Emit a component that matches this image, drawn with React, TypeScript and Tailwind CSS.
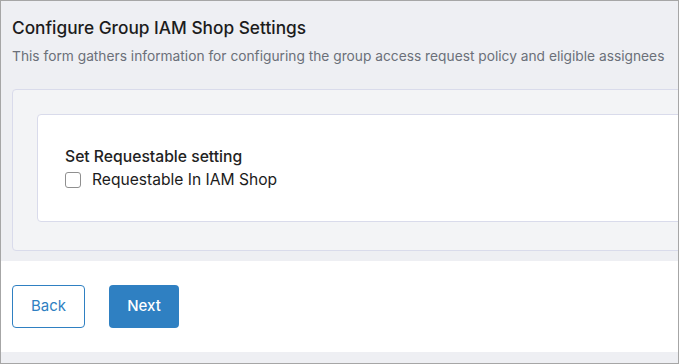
export default function App() {
  const font = { fontFamily: "Inter, 'Noto Sans', sans-serif" };
  return (
    <div
      className="w-[679px] h-[364px] border border-[#a6a6a6] bg-[#eeeff3] overflow-hidden flex flex-col"
      style={font}
    >
      <div className="pl-[11px] pt-[15px]">
        <h1 className="text-[17.3px] leading-[24px] font-medium text-[#1c1c1c]">
          Configure Group IAM Shop Settings
        </h1>
        <p className="mt-[6px] text-[13.75px] leading-[20px] text-[#6b7079] whitespace-nowrap">
          This form gathers information for configuring the group access request policy and eligible assignees
        </p>
      </div>
      <div className="mt-[23px] ml-[11px] mr-[-40px] border border-[#d9dbeb] rounded-[4px] bg-[#f3f4f6] pl-[24px] pt-[24px] pb-[28px]">
        <div className="border border-[#d9dbeb] rounded-[4px] bg-white pl-[27px] pt-[32px] pb-[31px]">
          <div className="text-[15.7px] leading-[20px] font-medium text-[#222]">
            Set Requestable setting
          </div>
          <label className="mt-[3px] flex items-center h-[20px]">
            <span className="w-[16px] h-[16px] rounded-[3px] border border-[#8f8f8f] bg-white" />
            <span className="ml-[11px] text-[15.6px] leading-[20px] text-[#1c1c1c]">
              Requestable In IAM Shop
            </span>
          </label>
        </div>
      </div>
      <div className="mt-[10px] bg-white h-[91px] flex items-center pl-[11px] gap-[24px]">
        <button className="w-[73px] h-[43px] rounded-[4px] border border-[#2f80c2] text-[#2f80c2] text-[15px] bg-white">
          Back
        </button>
        <button className="w-[70px] h-[43px] rounded-[4px] bg-[#2f80c2] text-white text-[15px] font-medium">
          Next
        </button>
      </div>
    </div>
  );
}
